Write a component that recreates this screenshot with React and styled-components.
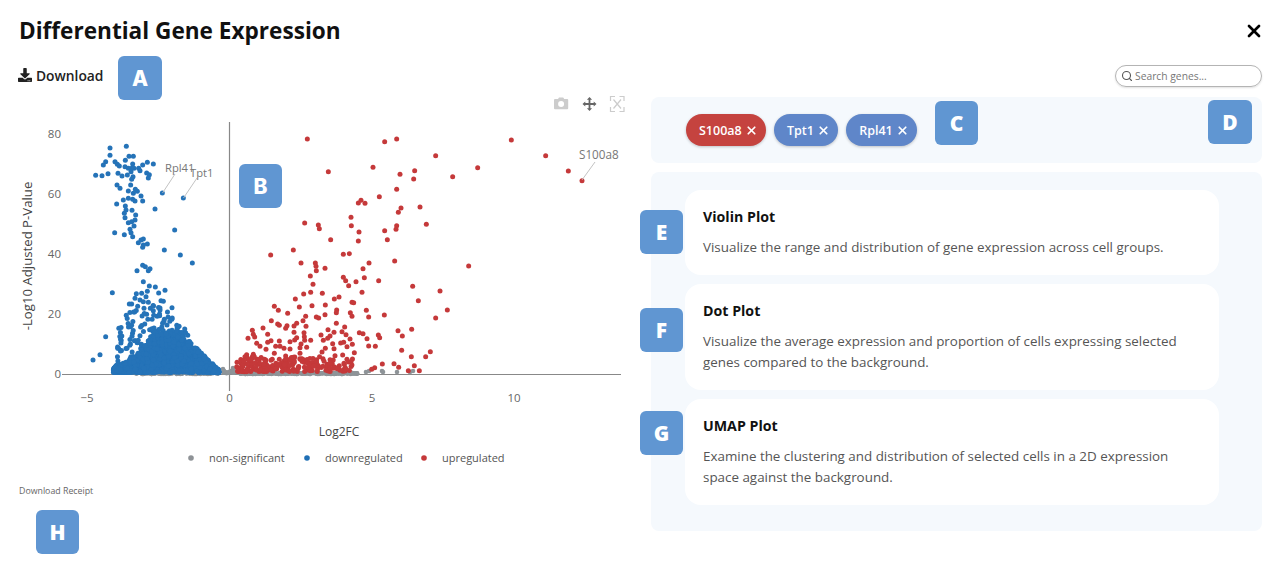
import styled, { createGlobalStyle } from "styled-components";
import { FaDownload } from "react-icons/fa";
import { X, Search } from "lucide-react";

const GlobalStyle = createGlobalStyle`
    * { box-sizing: border-box; }
    body {
        margin: 0;
        background: #fff;
        font-family: "Open Sans", "Liberation Sans", sans-serif;
    }
`;

const Page = styled.div`
    position: relative;
    width: 1280px;
    height: 567px;
    overflow: hidden;
    background: #fff;
`;

const Header = styled.header`
    display: flex;
    align-items: center;
    justify-content: space-between;
    height: 26px;
    margin-top: 17px;
    padding: 0 16px 0 19px;
`;

const Title = styled.h1`
    margin: 0;
    font-size: 22.6px;
    font-weight: 700;
    color: #111;
`;

const CloseButton = styled.button`
    display: flex;
    margin-top: 2px;
    padding: 0;
    border: 0;
    background: none;
    color: #000;
`;

const Toolbar = styled.div`
    display: flex;
    align-items: center;
    justify-content: space-between;
    height: 21px;
    margin-top: 22px;
    padding: 0 18px;
`;

const DownloadButton = styled.button`
    display: flex;
    align-items: center;
    gap: 4px;
    margin-top: -1px;
    padding: 0;
    border: 0;
    background: none;
    font: 600 13.8px "Open Sans", sans-serif;
    color: #222;
`;

const SearchBox = styled.label`
    display: flex;
    align-items: center;
    gap: 2px;
    width: 147px;
    height: 22px;
    padding: 0 8px 0 5px;
    border: 1px solid #b4b4b4;
    border-radius: 11px;
    box-shadow: 0 1px 2px rgba(0, 0, 0, 0.12);
    color: #555;
`;

const SearchInput = styled.input`
    flex: 1;
    min-width: 0;
    padding: 0;
    border: 0;
    outline: 0;
    background: none;
    font: 400 10.3px "Open Sans", sans-serif;

    &::placeholder {
        color: #777;
        opacity: 1;
    }
`;

const Main = styled.main`
    display: grid;
    grid-template-columns: 651px 611px;
    margin-top: 6px;
`;

const PlotColumn = styled.section`
    display: flex;
    flex-direction: column;
`;

const PlotSvg = styled.svg`
    display: block;
    width: 640px;
    height: 388px;
`;

const ReceiptLink = styled.a`
    margin: 5px 0 0 19px;
    font-size: 8.8px;
    color: #666;
`;

const SideColumn = styled.section`
    display: flex;
    flex-direction: column;
    gap: 9px;
    padding-top: 5px;
`;

const GenePanel = styled.div`
    display: flex;
    gap: 8px;
    height: 66px;
    padding: 17px 35px;
    border-radius: 8px;
    background: #f5f9fd;
`;

const Chip = styled.button`
    display: flex;
    align-items: center;
    height: 32px;
    padding: 0 8px 0 13px;
    border: 0;
    border-radius: 16px;
    background: ${(p) => (p.$up ? "#c5433f" : "#5f86c9")};
    box-shadow: 0 1px 3px rgba(0, 0, 0, 0.22);
    font: 600 12.5px "Open Sans", sans-serif;
    color: #fff;
    white-space: pre;
`;

const PlotsPanel = styled.div`
    display: flex;
    flex-direction: column;
    gap: 9px;
    height: 359px;
    padding: 18px 43px 0 34px;
    border-radius: 8px;
    background: #f5f9fd;
`;

const Card = styled.article`
    padding: 18px 18px 17px;
    border-radius: 16px;
    background: #fff;
`;

const CardTitle = styled.h3`
    margin: 0 0 11px;
    font-size: 14.2px;
    line-height: 18px;
    font-weight: 700;
    color: #111;
`;

const CardText = styled.p`
    margin: 0;
    font-size: 13.4px;
    line-height: 21px;
    color: #555;
`;

const Marker = styled.div`
    position: absolute;
    left: ${(p) => p.$x}px;
    top: ${(p) => p.$y}px;
    display: flex;
    align-items: center;
    justify-content: center;
    width: ${(p) => (p.$wide ? 44 : 43)}px;
    height: 44px;
    border-radius: 6px;
    background: #6096d2;
    font-family: ${(p) => (p.$inter ? "Inter" : '"Open Sans"')}, sans-serif;
    font-size: 21px;
    font-weight: 800;
    color: #fff;
`;

const AxisText = styled.text`
    font-family: "Open Sans", sans-serif;
    font-size: ${(p) => p.$size || 11.5}px;
    fill: ${(p) => p.$color || "#666"};
    text-anchor: ${(p) => p.$anchor || "middle"};
`;

// seeded so the cloud is the same on every render
function makeRandom(seed) {
    let a = seed;
    return () => {
        a = (a + 0x6d2b79f5) | 0;
        let t = Math.imul(a ^ (a >>> 15), 1 | a);
        t = (t + Math.imul(t ^ (t >>> 7), 61 | t)) ^ t;
        return ((t ^ (t >>> 14)) >>> 0) / 4294967296;
    };
}

// read off the reference crops, 3x units
const redRaw = [
    [262,147],[494,155],[530,147],[874,150],[647,197],[977,197],[773,233],[1045,243],[1086,272],[325,245],
    [459,232],[584,242],[540,253],[581,267],[698,260],[530,298],[478,320],[415,339],[423,331],[435,340],
    [600,351],[543,354],[535,367],[393,382],[254,399],[295,405],[298,416],[394,407],[417,426],[530,407],
    [528,418],[494,422],[619,403],[332,449],[415,453],[502,449],[152,495],[220,480],[370,493],[388,491],
    [243,519],[286,519],[288,529],[289,542],[315,535],[447,519],[429,536],[524,513],[746,528],[271,558],
    [370,562],[377,572],[408,575],[433,563],[476,572],[279,583],[386,587],[578,589],[660,603],[251,612],
    [272,607],[307,610],[426,607],[226,627],[343,627],[357,621],[396,637],[401,638],[595,632],[238,651],
    [276,647],[316,645],[163,649],[175,661],[203,670],[350,660],[349,668],[439,661],[682,660],[391,668],
    [396,679],[446,681],[493,675],[257,679],[315,674],[289,681],[296,684],[647,684],[154,692],[230,700],
    [249,692],[349,700],[173,702],[178,706],[129,714],[97,721],[201,707],[197,715],[222,708],[258,709],
    [374,711],[324,719],[534,722],[575,718],[222,727],[252,728],[342,727],[366,725],[378,734],[418,728],
    [429,731],[475,735],[479,743],[547,738],[303,735],[330,738],[143,733],[100,733],[104,741],[84,745],
    [230,743],[253,740],[254,751],[272,751],[224,750],[210,755],[178,753],[153,752],[143,757],[110,760],
    [120,769],[390,747],[441,746],[323,745],[310,751],[362,759],[371,757],[397,763],[338,761],[446,768],
    [466,769],[381,770],[243,762],[260,772],[240,773],[167,769],[180,769],[138,778],[192,775],[210,777],
    [342,776],[316,775],[545,781],[403,788],[240,790],[306,786],[631,785],[80,794],[100,793],[163,790],
    [197,798],[368,795],[345,797],[574,800],[617,800],[97,800],[487,822],[522,821],[464,833],[455,838],
    [536,832],[583,827],[565,842],[598,842],
];

const blueRaw = [
    [150,54],[199,49],[150,76],[207,79],[220,79],[196,91],[137,95],[130,105],[165,95],[172,103],
    [178,108],[218,102],[248,105],[262,97],[280,102],[236,115],[215,115],[205,115],[195,110],[107,136],
    [126,137],[144,131],[174,130],[186,138],[202,135],[213,125],[222,115],[240,122],[260,129],[268,134],
    [265,144],[219,140],[215,148],[171,165],[180,175],[212,165],[226,178],[232,184],[205,183],[220,190],
    [243,198],[205,205],[218,208],[248,213],[190,210],[170,222],[225,213],[307,189],[370,204],[285,237],
    [196,228],[198,240],[216,241],[193,250],[227,255],[195,263],[225,270],[205,278],[215,275],[222,288],
    [210,298],[213,308],[164,308],[193,314],[218,320],[344,300],[250,327],[243,330],[235,338],[262,342],
    [250,345],[248,352],[313,360],[361,375],[397,399],[248,406],[256,410],[270,416],[265,422],[231,422],
    [250,455],[268,468],[286,471],[315,481],[157,488],[296,489],[262,484],[229,491],[245,490],[225,505],
    [240,510],[258,500],[215,522],[208,522],[250,515],[265,517],[303,512],[310,514],[336,533],[271,535],
    [280,542],[300,540],[252,535],[137,620],[120,674],[99,690],
];

const profile = [[160,712],[200,700],[230,675],[270,635],[310,600],[350,610],[390,635],[430,680],[478,725]];

function massTop(x) {
    for (let i = 1; i < profile.length; i++) {
        const [x0, y0] = profile[i - 1];
        const [x1, y1] = profile[i];
        if (x <= x1) return y0 + ((y1 - y0) * (x - x0)) / (x1 - x0);
    }
    return 730;
}

function buildPoints() {
    const rnd = makeRandom(42);
    const red = redRaw.map(([x, y]) => [220 + x / 3, 90 + y / 3]);
    for (let i = 0; i < 200; i++) {
        const zx = 50 + Math.pow(rnd(), 1.25) * 350;
        const zy = 845 - Math.pow(rnd(), 1.5) * 45;
        red.push([220 + zx / 3, 90 + zy / 3]);
    }

    const blue = blueRaw.map(([x, y]) => [60 + x / 3, 130 + y / 3]);
    for (let i = 0; i < 200; i++) {
        const zx = 172 + rnd() * 215;
        const zy = 520 + rnd() * 190;
        if (zy < massTop(zx) && zy > 490 + Math.abs(zx - 265) * 0.95) {
            blue.push([60 + zx / 3, 130 + zy / 3]);
        }
    }
    for (let i = 0; i < 1900; i++) {
        const zx = 160 + rnd() * 318;
        const top = massTop(zx) + rnd() * 14 - 7;
        const zy = Math.min(728, top + rnd() * (728 - top));
        blue.push([60 + zx / 3, 130 + zy / 3]);
    }

    const gray = [];
    for (let i = 0; i < 300; i++) {
        const x = 135 + Math.pow(rnd(), 0.8) * 225;
        gray.push([x, 374 - rnd() * 1.4 - (x > 215 && x < 240 ? rnd() * 2 : 0)]);
    }
    for (const p of [[223,369],[233,368],[224,371],[366,372],[369,371],[382,371],[383,372],[397,372],[410,372],[413,371]]) {
        gray.push(p);
    }
    return { red, blue, gray };
}

const { red, blue, gray } = buildPoints();

function Dots({ points, color, r }) {
    return points.map(([x, y], i) => <circle key={i} cx={x} cy={y} r={r} fill={color} />);
}

const xTicks = [
    ["\u22125", 87],
    ["0", 229.5],
    ["5", 372],
    ["10", 514],
];
const yTicks = [
    ["80", 134],
    ["60", 194],
    ["40", 254],
    ["20", 314],
    ["0", 374],
];
const callouts = [
    { name: "Rpl41", tx: 165, ty: 172, size: 11.2, x1: 175, y1: 174, x2: 162.5, y2: 193 },
    { name: "Tpt1", tx: 190, ty: 177, size: 11.2, x1: 197, y1: 178, x2: 183.5, y2: 198 },
    { name: "S100a8", tx: 579, ty: 159, size: 11.7, x1: 595, y1: 162, x2: 582, y2: 180 },
];
const legend = [
    { label: "non-significant", color: "#8e9296", dot: 191, text: 209 },
    { label: "downregulated", color: "#1f6fb5", dot: 307, text: 325 },
    { label: "upregulated", color: "#c5393a", dot: 424, text: 442 },
];

function VolcanoPlot() {
    return (
        <PlotSvg viewBox="0 92 640 388">
            <line x1="229.5" y1="122" x2="229.5" y2="391" stroke="#888" strokeWidth="1.2" />
            <line x1="62" y1="374.5" x2="621" y2="374.5" stroke="#888" strokeWidth="1.2" />

            <Dots points={gray} color="#8e9498" r={2.3} />
            <Dots points={red} color="#c5393a" r={2.5} />
            <Dots points={blue} color="#2573b8" r={2.5} />

            {callouts.map((c) => (
                <g key={c.name}>
                    <line x1={c.x1} y1={c.y1} x2={c.x2} y2={c.y2} stroke="#bbb" strokeWidth="0.9" />
                    <AxisText x={c.tx} y={c.ty} $anchor="start" $size={c.size} $color="#777">{c.name}</AxisText>
                </g>
            ))}

            {yTicks.map(([label, y]) => (
                <AxisText key={label} x={61} y={y + 4} $anchor="end">{label}</AxisText>
            ))}
            {xTicks.map(([label, x]) => (
                <AxisText key={label} x={x} y={402}>{label}</AxisText>
            ))}

            <AxisText x={339} y={436} $size={12} $color="#444">Log2FC</AxisText>
            <AxisText x={32} y={256} $size={13.2} $color="#444" transform="rotate(-90 32 256)">-Log10 Adjusted P-Value</AxisText>

            {legend.map((l) => (
                <g key={l.label}>
                    <circle cx={l.dot} cy={458} r={2.8} fill={l.color} />
                    <AxisText x={l.text} y={462} $anchor="start" $size={11} $color="#555">{l.label}</AxisText>
                </g>
            ))}

            {/* modebar: camera, pan, autoscale */}
            <path
                d="M555 99h3l1-1.6h4.2l1 1.6h3a1 1 0 0 1 1 1v8.2a1 1 0 0 1-1 1h-12.2a1 1 0 0 1-1-1V100a1 1 0 0 1 1-1zm6.1 1.9a3 3 0 1 0 0 6 3 3 0 0 0 0-6z"
                fill="#ccc"
                fillRule="evenodd"
            />
            <path
                d="M589.5 97l2.6 2.8h-1.700v3.300h3.300v-1.700l2.800 2.600-2.800 2.600v-1.700h-3.300v3.300h1.700l-2.600 2.800-2.600-2.800h1.700v-3.300h-3.300v1.700l-2.800-2.600 2.800-2.600v1.700h3.300v-3.300h-1.700z"
                fill="#666"
            />
            <g stroke="#ccc" strokeWidth="1.2" fill="none">
                <path d="M610.5 101v-4.500h4.500M619.500 96.500h4.500v4.500M624 107v4.500h-4.500M615 111.500h-4.500V107" />
                <path d="M613.500 99.500l7.500 9M621 99.500l-7.500 9" />
            </g>
        </PlotSvg>
    );
}

const plotCards = [
    {
        title: "Violin Plot",
        text: "Visualize the range and distribution of gene expression across cell groups.",
    },
    {
        title: "Dot Plot",
        text: "Visualize the average expression and proportion of cells expressing selected genes compared to the background.",
    },
    {
        title: "UMAP Plot",
        text: "Examine the clustering and distribution of selected cells in a 2D expression space against the background.",
    },
];

const markers = [
    { label: "A", x: 118, y: 56, wide: true, inter: true },
    { label: "B", x: 239, y: 164, inter: true },
    { label: "C", x: 935, y: 101 },
    { label: "D", x: 1208, y: 100, wide: true },
    { label: "E", x: 640, y: 210 },
    { label: "F", x: 640, y: 308 },
    { label: "G", x: 640, y: 411 },
    { label: "H", x: 36, y: 510 },
];

function GeneChip({ name, up }) {
    return (
        <Chip $up={up}>
            {name + " "}
            <X size={13} strokeWidth={3.2} />
        </Chip>
    );
}

export default function App() {
    return (
        <Page>
            <GlobalStyle />
            <Header>
                <Title>Differential Gene Expression</Title>
                <CloseButton aria-label="Close">
                    <X size={20} strokeWidth={3.2} />
                </CloseButton>
            </Header>

            <Toolbar>
                <DownloadButton>
                    <FaDownload size={14} />
                    Download
                </DownloadButton>
                <SearchBox>
                    <Search size={12} strokeWidth={2.2} />
                    <SearchInput placeholder="Search genes..." />
                </SearchBox>
            </Toolbar>

            <Main>
                <PlotColumn>
                    <VolcanoPlot />
                    <ReceiptLink>Download Receipt</ReceiptLink>
                </PlotColumn>

                <SideColumn>
                    <GenePanel>
                        <GeneChip name="S100a8" up />
                        <GeneChip name="Tpt1" />
                        <GeneChip name="Rpl41" />
                    </GenePanel>
                    <PlotsPanel>
                        {plotCards.map((card) => (
                            <Card key={card.title}>
                                <CardTitle>{card.title}</CardTitle>
                                <CardText>{card.text}</CardText>
                            </Card>
                        ))}
                    </PlotsPanel>
                </SideColumn>
            </Main>

            {markers.map((m) => (
                <Marker key={m.label} $x={m.x} $y={m.y} $wide={m.wide} $inter={m.inter}>{m.label}</Marker>
            ))}
        </Page>
    );
}
